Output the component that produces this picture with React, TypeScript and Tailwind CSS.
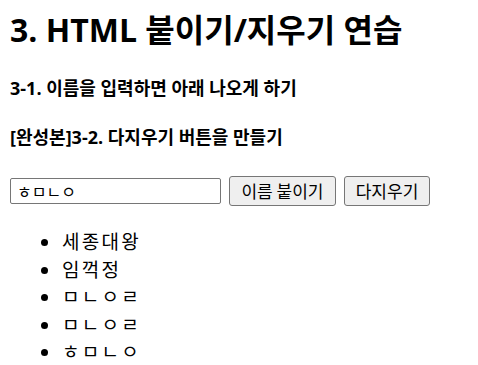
import React, { useState } from 'react';

const App: React.FC = () => {
  const [name, setName] = useState('ㅎㅁㄴㅇ');
  const [names, setNames] = useState<string[]>(['세종대왕', '임꺽정', 'ㅁㄴㅇㄹ', 'ㅁㄴㅇㄹ', 'ㅎㅁㄴㅇ']);

  const handleAdd = () => {
    if (!name.trim()) return;
    setNames((prev) => [...prev, name]);
  };

  return (
    <div className="min-h-screen bg-white px-[10px] text-black font-['Open_Sans','Noto_Sans_CJK_KR',sans-serif]">
      <h1 className="pt-[10px] text-[32px] leading-[40px] font-bold">3. HTML 붙이기/지우기 연습</h1>

      <h4 className="mt-[27px] text-[18px] leading-[22px] font-bold">3-1. 이름을 입력하면 아래 나오게 하기</h4>
      <h4 className="mt-[27px] text-[18px] leading-[22px] font-bold">[완성본]3-2. 다지우기 버튼을 만들기</h4>

      <div className="mt-[28px] flex items-center">
        <input
          value={name}
          onChange={(e) => setName(e.target.value)}
          className="w-[211px] h-[26px] px-[6px] border border-[#767676] rounded-[2px] text-[16px] outline-none font-['Noto_Sans_CJK_KR',sans-serif]"
        />
        <button
          onClick={handleAdd}
          className="ml-[8px] w-[107px] h-[30px] bg-[#efefef] border border-[#767676] rounded-[3px] text-[17px] font-['Noto_Sans_CJK_KR',sans-serif]"
        >
          이름 붙이기
        </button>
        <button
          onClick={() => setNames([])}
          className="ml-[8px] w-[86px] h-[30px] bg-[#efefef] border border-[#767676] rounded-[3px] text-[17px] font-['Noto_Sans_CJK_KR',sans-serif]"
        >
          다지우기
        </button>
      </div>

      <ul className="mt-[21px] pl-[52px] list-disc text-[19px] leading-[27.5px] tracking-[2.3px] font-['Noto_Sans_CJK_KR',sans-serif]">
        {names.map((n, i) => (
          <li key={i}>{n}</li>
        ))}
      </ul>
    </div>
  );
};

export default App;
